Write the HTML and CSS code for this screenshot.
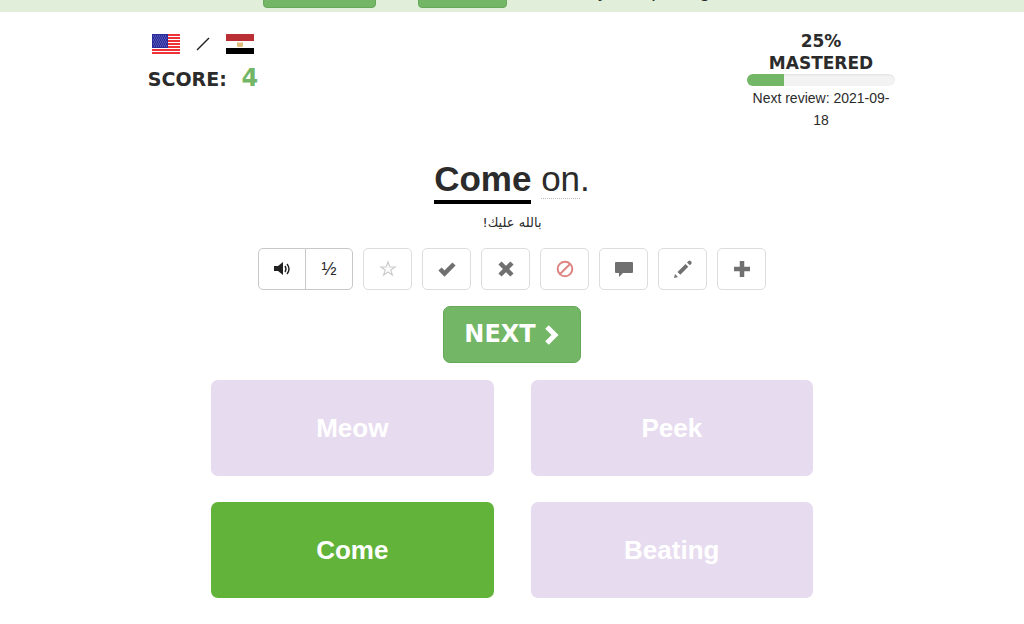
FILE: index.html
```
<!DOCTYPE html>
<html lang="en">

<head>
    <meta charset="UTF-8">
    <meta name="viewport" content="width=device-width, initial-scale=1.0">
    <title>Play</title>
    <link rel="stylesheet" href="styles.css">
</head>

<body>
    <header class="notice">
        <button class="notice-btn wide" aria-label="Continue"></button>
        <button class="notice-btn" aria-label="Close"></button>
        <span class="notice-text">by completing</span>
    </header>

    <main>
        <section class="status">
            <div class="status-col">
                <div class="flags">
                    <svg width="28" height="20" viewBox="0 0 28 20">
                        <rect width="28" height="20" fill="#fff" />
                        <path d="M0 1h28M0 4h28M0 7h28M0 10h28M0 13h28M0 16h28M0 19h28" stroke="#ee3038" stroke-width="2" />
                        <rect width="16" height="14" fill="#2b2b9c" />
                        <path d="M1 2h14M2 4h13M1 6h14M2 8h13M1 10h14M2 12h13" stroke="#7d7dcf" stroke-dasharray="1 1" />
                    </svg>
                    <svg width="14" height="14" viewBox="0 0 14 14">
                        <path d="M1 13L13 1" stroke="#222" stroke-width="1.4" />
                    </svg>
                    <svg width="28" height="20" viewBox="0 0 28 20">
                        <rect width="28" height="20" fill="#fff" />
                        <rect width="28" height="7" fill="#b92f34" />
                        <rect y="14" width="28" height="6" fill="#000" />
                        <path d="M11 8l2 1 1-1 1 1 2-1v4l-1 1h-4l-1-1z" fill="#e0bd7c" />
                    </svg>
                </div>
                <div class="score">SCORE: <span class="points">4</span></div>
            </div>
            <div class="status-col">
                <label class="mastered" for="mastered">25% MASTERED</label>
                <progress id="mastered" class="bar" value="25" max="100"></progress>
                <div class="review">Next review: 2021-09-<wbr>18</div>
            </div>
        </section>

        <h1 class="sentence"><span class="cloze">Come</span> <span class="word">on</span>.</h1>
        <p class="translation" lang="ar" dir="rtl">بالله عليك!</p>

        <div class="tools">
            <div class="tool-group">
                <button class="tool" aria-label="Listen">
                    <svg width="20" height="16" viewBox="0 0 20 16" fill="none" stroke="#222">
                        <path d="M2 5h4l5-4v13l-5-4H2z" fill="#222" stroke="none" />
                        <path d="M13 5q2 3 0 6M15 3q4 5 0 10" stroke-width="1.4" />
                    </svg>
                </button>
                <button class="tool">½</button>
            </div>
            <button class="tool" aria-label="Favorite">
                <svg width="18" height="18" viewBox="0 0 18 18">
                    <path d="M9 2l1.800 5h5.200l-4.200 3.100 1.600 5L9 12l-4.400 3.100 1.600-5L2 7h5.200z" fill="none" stroke="#ccc" stroke-width="1.200" />
                </svg>
            </button>
            <button class="tool" aria-label="Known">
                <svg width="18" height="18" viewBox="0 0 18 18">
                    <path d="M2 9l4.500 4.500L16 4" fill="none" stroke="#707070" stroke-width="4.500" />
                </svg>
            </button>
            <button class="tool" aria-label="Reset">
                <svg width="18" height="18" viewBox="0 0 18 18">
                    <path d="M3 3l12 12M15 3L3 15" stroke="#707070" stroke-width="4.500" />
                </svg>
            </button>
            <button class="tool" aria-label="Ignore">
                <svg width="18" height="18" viewBox="0 0 18 18" fill="none" stroke="#de8583" stroke-width="2">
                    <circle cx="9" cy="9" r="7.300" />
                    <path d="M4 14L14 4" />
                </svg>
            </button>
            <button class="tool" aria-label="Comment">
                <svg width="18" height="18" viewBox="0 0 18 18">
                    <path d="M1 2h16q1 0 1 1v9q0 1-1 1H8l-4 4v-4H1q-1 0-1-1V3q0-1 1-1z" fill="#707070" />
                </svg>
            </button>
            <button class="tool" aria-label="Edit">
                <svg width="20" height="20" viewBox="0 0 20 20" fill="#707070">
                    <path d="M1 19l1-4 3 3zM4.500 13l8-8 2.800 2.800-8 8zM14 3.500l1.500-1.500q1-1 2 0l.8.8q1 1 0 2L16.800 6.300z" />
                </svg>
            </button>
            <button class="tool" aria-label="Add">
                <svg width="18" height="18" viewBox="0 0 18 18">
                    <path d="M9 1v16M1 9h16" stroke="#707070" stroke-width="4.500" />
                </svg>
            </button>
        </div>

        <button class="next">NEXT
            <svg width="16" height="20" viewBox="0 0 16 20">
                <path d="M3 2l8 8-8 8" fill="none" stroke="#fff" stroke-width="5" />
            </svg>
        </button>

        <div class="answers">
            <button class="answer">Meow</button>
            <button class="answer">Peek</button>
            <button class="answer correct">Come</button>
            <button class="answer">Beating</button>
        </div>
    </main>
</body>

</html>
```

FILE: styles.css
```
* {
    margin: 0;
    padding: 0;
    box-sizing: border-box;
}

body {
    font-family: "Liberation Sans", Arial, sans-serif;
    color: #2b2b2b;
    background-color: #fff;
}

button {
    font-family: inherit;
    color: inherit;
    cursor: pointer;
}

.notice {
    display: flex;
    justify-content: center;
    align-items: flex-end;
    height: 12px;
    overflow: hidden;
    padding-bottom: 4px;
    padding-right: 51px;
    background-color: #e1efda;
}

.notice-btn {
    width: 89px;
    height: 40px;
    margin-right: 42px;
    background-color: #73b766;
    border: 1px solid #64a858;
    border-radius: 4px;
}

.notice-btn.wide {
    width: 113px;
}

.notice-text {
    margin-left: 38px;
    font-size: 20px;
    line-height: 28px;
    padding-bottom: 4px;
    white-space: nowrap;
}

main {
    max-width: 766px;
    margin: 0 auto;
    display: flex;
    flex-direction: column;
    align-items: center;
}

.status {
    width: 100%;
    display: flex;
    justify-content: space-between;
    padding-top: 18px;
}

.status-col {
    width: 148px;
    display: flex;
    flex-direction: column;
    align-items: center;
    text-align: center;
}

.flags {
    display: flex;
    align-items: center;
    gap: 16px;
    padding-top: 4px;
}

.score,
.mastered {
    font-family: "DejaVu Sans", sans-serif;
    font-weight: bold;
}

.score {
    font-size: 19px;
    line-height: 28px;
    padding-top: 10px;
    white-space: nowrap;
}

.points {
    margin-left: 8px;
    font-size: 24px;
    color: #73b766;
}

.mastered {
    font-size: 17px;
    line-height: 22px;
}

.bar {
    appearance: none;
    width: 100%;
    height: 12px;
    margin-bottom: 1px;
    border: none;
    border-radius: 6px;
    overflow: hidden;
}

.bar::-webkit-progress-bar {
    background-color: #f3f3f3;
    box-shadow: inset 0 1px 2px #e0e0e0;
    border-radius: 6px;
}

.bar::-webkit-progress-value {
    background-color: #73b766;
}

.review {
    font-size: 14px;
    line-height: 22px;
}

.sentence {
    padding-top: 28px;
    font-size: 35px;
    line-height: 40px;
    font-weight: normal;
}

.cloze {
    font-weight: bold;
    padding-bottom: 2px;
    border-bottom: 4px solid #000;
}

.word {
    border-bottom: 1px dotted #bbb;
}

.translation {
    padding-top: 12px;
    font-family: "DejaVu Sans", sans-serif;
    font-size: 13px;
    line-height: 24px;
}

.tools {
    display: flex;
    gap: 10px;
    padding-top: 13px;
}

.tool {
    display: flex;
    justify-content: center;
    align-items: center;
    width: 49px;
    height: 42px;
    font-size: 18px;
    background-color: #fff;
    border: 1px solid #ddd;
    border-radius: 5px;
}

.tool-group {
    display: flex;
}

.tool-group .tool {
    width: 48px;
    border-color: #c8c8c8;
}

.tool-group .tool:first-child {
    border-radius: 5px 0 0 5px;
}

.tool-group .tool:last-child {
    margin-left: -1px;
    border-radius: 0 5px 5px 0;
}

.next {
    display: flex;
    align-items: center;
    gap: 8px;
    margin-top: 16px;
    padding: 13px 20px;
    font-family: "DejaVu Sans", sans-serif;
    font-size: 24px;
    line-height: 29px;
    font-weight: bold;
    color: #fff;
    background-color: #73b766;
    border: 1px solid #64a858;
    border-radius: 7px;
}

.answers {
    width: 602px;
    max-width: 100%;
    display: grid;
    grid-template-columns: 1fr 1fr;
    gap: 26px 37px;
    padding-top: 17px;
}

.answer {
    height: 96px;
    font-size: 26px;
    font-weight: bold;
    color: #fff;
    background-color: #e7dcef;
    border: none;
    border-radius: 7px;
}

.answer.correct {
    background-color: #61b33a;
}
```
